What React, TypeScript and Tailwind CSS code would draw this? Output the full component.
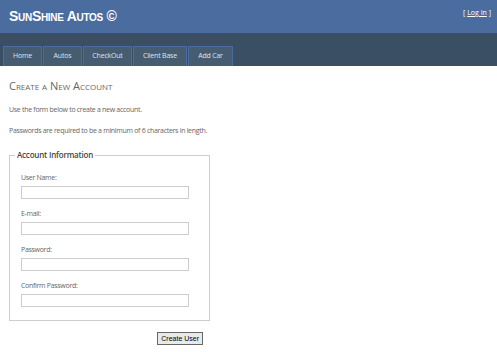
import React from 'react';

const tabs = [
  { label: 'Home', w: 'w-[39px]' },
  { label: 'Autos', w: 'w-[39px]' },
  { label: 'CheckOut', w: 'w-[49px]' },
  { label: 'Client Base', w: 'w-[54px]' },
  { label: 'Add Car', w: 'w-[45px]' },
];

const fields = ['User Name:', 'E-mail:', 'Password:', 'Confirm Password:'];

const App: React.FC = () => {
  return (
    <div className="w-[497px] h-[352px] overflow-hidden bg-white font-['Open_Sans',sans-serif] text-[#666]">
      {/* Header */}
      <div className="h-[33px] bg-[#4b6c9e] flex items-start justify-between pl-[9px] pr-[6px]">
        <h1 className="mt-[7px] text-[14px] leading-[18px] tracking-[-0.3px] font-bold text-white [font-variant:small-caps] font-['Liberation_Sans',sans-serif]">
          SunShine Autos ©
        </h1>
        <div className="mt-[8px] text-[7px] leading-[10px] text-white">
          [ <a href="#" className="underline">Log In</a> ]
        </div>
      </div>

      {/* Menu band */}
      <div className="h-[33px] bg-[#3a4f63] flex items-end pl-[3px]">
        <div className="flex gap-[1px]">
          {tabs.map((t) => (
            <div
              key={t.label}
              className={`${t.w} h-[20px] bg-[#465c71] border border-[#4b6c9e] border-b-0 flex items-center justify-center text-[7px] tracking-[-0.2px] text-[#dde4ec]`}
            >
              {t.label}
            </div>
          ))}
        </div>
      </div>

      {/* Main */}
      <div className="px-[9px] pt-[13px] tracking-[-0.3px]">
        <h2 className="text-[11px] leading-[14px] tracking-normal [font-variant:small-caps] text-[#666]">Create a New Account</h2>
        <p className="mt-[12px] text-[7px] leading-[10px]">Use the form below to create a new account.</p>
        <p className="mt-[11px] text-[7px] leading-[10px]">Passwords are required to be a minimum of 6 characters in length.</p>

        <fieldset className="mt-[13px] w-[201px] h-[172px] border border-[#ccc] pl-[11px] pt-[12px]">
          <legend className="ml-[-6px] px-[2px] text-[8px] tracking-[-0.2px] font-semibold text-[#444]">Account Information</legend>
          <div className="flex flex-col gap-[10px]">
            {fields.map((f) => (
              <div key={f} className="flex flex-col gap-[3px]">
                <label className="text-[7px] leading-[10px] text-[#666]">{f}</label>
                <input type="text" className="w-[168px] h-[13px] border border-[#ccc] bg-white" />
              </div>
            ))}
          </div>
        </fieldset>

        <div className="w-[194px] flex justify-end mt-[11px]">
          <button className="h-[13px] px-[3px] bg-[#e9e9e9] border border-[#666] text-[7px] leading-[10px] tracking-normal text-black font-['Liberation_Sans',sans-serif]">
            Create User
          </button>
        </div>
      </div>
    </div>
  );
};

export default App;
